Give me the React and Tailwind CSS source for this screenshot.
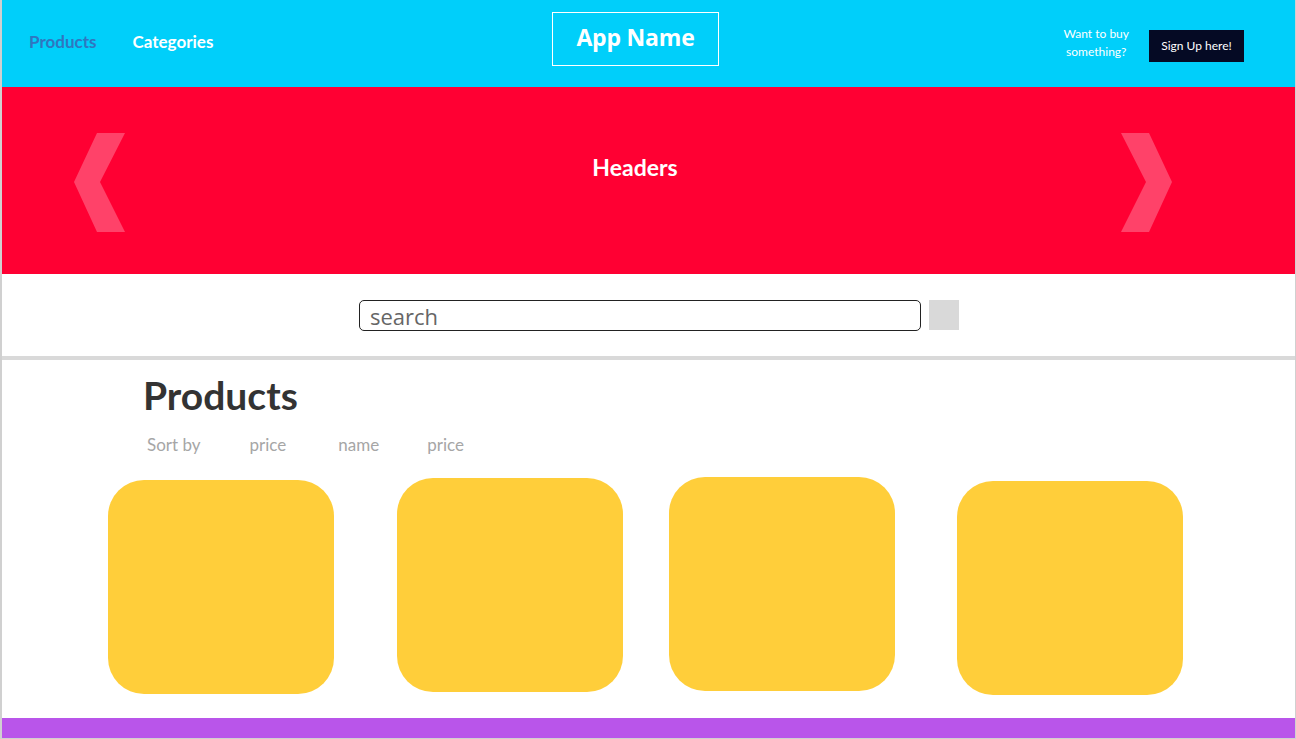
import React from 'react';

const cards = [
  { id: 1, cls: 'mt-[3px]' },
  { id: 2, cls: 'mt-[1px] ml-[63px]' },
  { id: 3, cls: 'mt-0 ml-[46px]' },
  { id: 4, cls: 'mt-[4px] ml-[62px]' },
];

const Chevron = ({ flip }) => (
  <svg width="52" height="100" viewBox="0 0 52 100" className={flip ? 'scale-x-[-1]' : ''}>
    <polygon points="23,0 51,0 26,49 51,99 23,99 0,49" fill="#ff4d73" fillOpacity="0.85" />
  </svg>
);

const App = () => {
  return (
    <div className="w-[1296px] h-[739px] flex flex-col bg-white border-l-2 border-r border-b border-[#d0d0d0] overflow-hidden font-['Lato',sans-serif]">
      {/* HEADER */}
      <header className="h-[87px] shrink-0 bg-[#00cffa] flex items-center relative">
        <nav className="flex items-center pl-[27px] gap-[36px] text-[17px] font-bold -mt-[4px]">
          <span className="text-[#2f76c0]">Products</span>
          <span className="text-white">Categories</span>
        </nav>
        <div className="absolute left-[550px] top-[12px] w-[167px] h-[54px] border border-white flex items-center justify-center">
          <span className="text-white text-[23px] font-bold font-['Open_Sans',sans-serif] tracking-[-0.2px] -mt-[4px]">App Name</span>
        </div>
        <div className="ml-auto flex items-center pr-[51px] gap-[20px]">
          <div className="text-white text-[12px] leading-[18px] text-center -mt-[2px]">
            Want to buy<br />something?
          </div>
          <button className="w-[95px] h-[32px] mt-[4px] bg-[#050a24] text-white text-[12px] flex items-center justify-center">
            Sign Up here!
          </button>
        </div>
      </header>

      {/* BANNER */}
      <section className="h-[187px] shrink-0 bg-[#ff0033] flex items-start pl-[72px] pt-[46px] relative">
        <Chevron />
        <h1 className="absolute left-0 w-[1266px] top-[63px] text-center text-white text-[23px] font-bold">Headers</h1>
        <div className="ml-[994px]">
          <Chevron flip />
        </div>
      </section>

      {/* SEARCH */}
      <section className="h-[82px] shrink-0 flex items-start pt-[26px] pl-[357px]">
        <div className="w-[562px] h-[31px] border border-[#222] rounded-[5px] flex items-center px-[10px]">
          <span className="text-[#666] text-[22px] leading-none font-['Open_Sans',sans-serif]">search</span>
        </div>
        <div className="w-[30px] h-[30px] bg-[#d9d9d9] ml-[8px]" />
      </section>

      <div className="h-[4px] shrink-0 bg-[#d9d9d9]" />

      {/* PRODUCTS */}
      <section className="flex-1 flex flex-col">
        <h2 className="pl-[141px] pt-[13px] text-[39px] leading-[44px] font-bold text-[#333]">Products</h2>
        <div className="flex items-center pl-[145px] mt-[18px] text-[17px] text-[#a6a6a6] leading-[20px]">
          <span>Sort by</span>
          <span className="ml-[49px]">price</span>
          <span className="ml-[52px]">name</span>
          <span className="ml-[48px]">price</span>
        </div>
        <div className="flex items-start pl-[106px] mt-[22px]">
          {cards.map((c) => (
            <div key={c.id} className={`w-[226px] h-[214px] bg-[#ffce3a] rounded-[36px] ${c.cls}`} />
          ))}
        </div>
      </section>

      {/* FOOTER */}
      <footer className="h-[20px] shrink-0 bg-[#b955ea]" />
    </div>
  );
};

export default App;
